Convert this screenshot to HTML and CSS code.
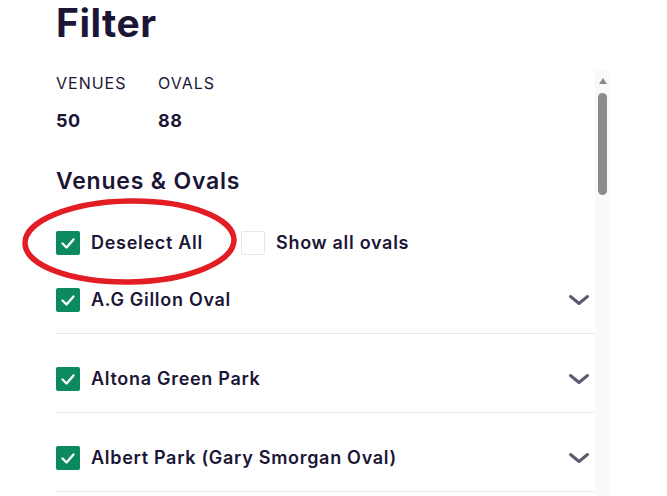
FILE: index.html
```html
<!DOCTYPE html>
<html lang="en">
<head>
    <meta charset="UTF-8">
    <meta name="viewport" content="width=device-width, initial-scale=1.0">
    <title>Filter</title>
    <link rel="stylesheet" href="styles.css">
</head>
<body>

    <div class="filter-page">
        <h1 class="filter-title">Filter</h1>

        <div class="filter-panel">
            <div class="filter-content">

                <!-- Counts -->
                <div class="stats">
                    <div class="stat">
                        <span class="stat-label">VENUES</span>
                        <span class="stat-value">50</span>
                    </div>
                    <div class="stat">
                        <span class="stat-label">OVALS</span>
                        <span class="stat-value">88</span>
                    </div>
                </div>

                <h2 class="section-title">Venues &amp; Ovals</h2>

                <!-- Bulk controls -->
                <div class="controls">
                    <label class="check-item">
                        <span class="box checked">
                            <svg viewBox="0 0 24 24" width="24" height="24"><path d="M6.5 12.5 L10.5 16.5 L17.5 8.5" /></svg>
                        </span>
                        <span class="check-text">Deselect All</span>
                    </label>
                    <label class="check-item">
                        <span class="box"></span>
                        <span class="check-text">Show all ovals</span>
                    </label>
                </div>

                <!-- Venue list -->
                <ul class="venue-list">
                    <li class="venue-row">
                        <label class="check-item">
                            <span class="box checked">
                                <svg viewBox="0 0 24 24" width="24" height="24"><path d="M6.5 12.5 L10.5 16.5 L17.5 8.5" /></svg>
                            </span>
                            <span class="check-text">A.G Gillon Oval</span>
                        </label>
                        <svg class="chevron" viewBox="0 0 22 12" width="22" height="12"><path d="M2.5 2.5 L11 9.5 L19.5 2.5" /></svg>
                    </li>
                    <li class="venue-row">
                        <label class="check-item">
                            <span class="box checked">
                                <svg viewBox="0 0 24 24" width="24" height="24"><path d="M6.5 12.5 L10.5 16.5 L17.5 8.5" /></svg>
                            </span>
                            <span class="check-text">Altona Green Park</span>
                        </label>
                        <svg class="chevron" viewBox="0 0 22 12" width="22" height="12"><path d="M2.5 2.5 L11 9.5 L19.5 2.5" /></svg>
                    </li>
                    <li class="venue-row">
                        <label class="check-item">
                            <span class="box checked">
                                <svg viewBox="0 0 24 24" width="24" height="24"><path d="M6.5 12.5 L10.5 16.5 L17.5 8.5" /></svg>
                            </span>
                            <span class="check-text">Albert Park (Gary Smorgan Oval)</span>
                        </label>
                        <svg class="chevron" viewBox="0 0 22 12" width="22" height="12"><path d="M2.5 2.5 L11 9.5 L19.5 2.5" /></svg>
                    </li>
                </ul>
            </div>

            <!-- Scrollbar -->
            <div class="scrollbar">
                <span class="scroll-arrow"></span>
                <span class="scroll-thumb"></span>
            </div>
        </div>

        <!-- Hand-drawn highlight over the Deselect All control -->
        <svg class="highlight" viewBox="0 0 220 92" width="220" height="92">
            <ellipse cx="109.5" cy="45.5" rx="104.5" ry="40.5" transform="rotate(-1 109.5 45.5)" />
        </svg>
    </div>

</body>
</html>
```

FILE: styles.css
```css
/* Page */
body, html {
    margin: 0;
    height: 100%;
    background-color: #fff;
    font-family: Inter, "Noto Sans", sans-serif;
    color: #1b1636;
    overflow: hidden;
}

.filter-page {
    position: relative;
    padding-left: 56px;
    width: 554px;
}

.filter-title {
    margin: 0 0 24px;
    font-size: 39px;
    line-height: 46px;
    font-weight: 700;
    letter-spacing: 0.5px;
}

/* Scrolling panel */
.filter-panel {
    display: flex;
    height: 426px;
    overflow: hidden;
}

.filter-content {
    flex: 1;
    padding-top: 1px;
}

/* Counts */
.stats {
    display: flex;
}

.stat {
    display: flex;
    flex-direction: column;
    width: 102px;
}

.stat-label {
    font-size: 16px;
    line-height: 24px;
    letter-spacing: 1px;
}

.stat-value {
    margin-top: 14px;
    font-size: 18px;
    line-height: 24px;
    font-weight: 700;
    letter-spacing: 0.5px;
}

.section-title {
    margin: 33px 0 0;
    font-size: 23px;
    line-height: 30px;
    font-weight: 600;
    letter-spacing: 0.8px;
}

/* Checkboxes */
.controls {
    display: flex;
    margin-top: 35px;
}

.controls .check-item {
    width: 185px;
}

.check-item {
    display: flex;
    align-items: center;
    gap: 11px;
}

.box {
    width: 24px;
    height: 24px;
    box-sizing: border-box;
    border: 1.5px solid #e4e9f0;
    border-radius: 2px;
    background-color: #fff;
}

.box.checked {
    border: none;
    background-color: #0b8a5e;
}

.box svg {
    display: block;
}

.box svg path {
    fill: none;
    stroke: #fff;
    stroke-width: 2.4;
    stroke-linecap: round;
    stroke-linejoin: round;
}

.check-text {
    font-size: 18px;
    line-height: 24px;
    font-weight: 600;
    letter-spacing: 0.7px;
}

/* Red marker circle */
.highlight {
    position: absolute;
    left: 20px;
    top: 196px;
}

.highlight ellipse {
    fill: none;
    stroke: #e21d24;
    stroke-width: 5.5;
}

/* Venue list */
.venue-list {
    list-style: none;
    margin: 0;
    padding: 0;
}

.venue-row {
    display: flex;
    align-items: center;
    justify-content: space-between;
    padding: 33px 6px 21px 0;
    border-bottom: 1px solid #e6e8ee;
}

.chevron {
    display: block;
    margin-right: -1px;
}

.chevron path {
    fill: none;
    stroke: #5b5a6f;
    stroke-width: 3;
    stroke-linecap: round;
    stroke-linejoin: round;
}

/* Scrollbar */
.scrollbar {
    width: 15px;
    background-color: #f9f9f9;
    display: flex;
    flex-direction: column;
    align-items: center;
}

.scroll-arrow {
    margin-top: 8px;
    width: 0;
    height: 0;
    border-left: 4.5px solid transparent;
    border-right: 4.5px solid transparent;
    border-bottom: 6px solid #8a8a8a;
}

.scroll-thumb {
    margin-top: 9px;
    width: 9px;
    height: 102px;
    border-radius: 5px;
    background-color: #8c8c8c;
}
```
